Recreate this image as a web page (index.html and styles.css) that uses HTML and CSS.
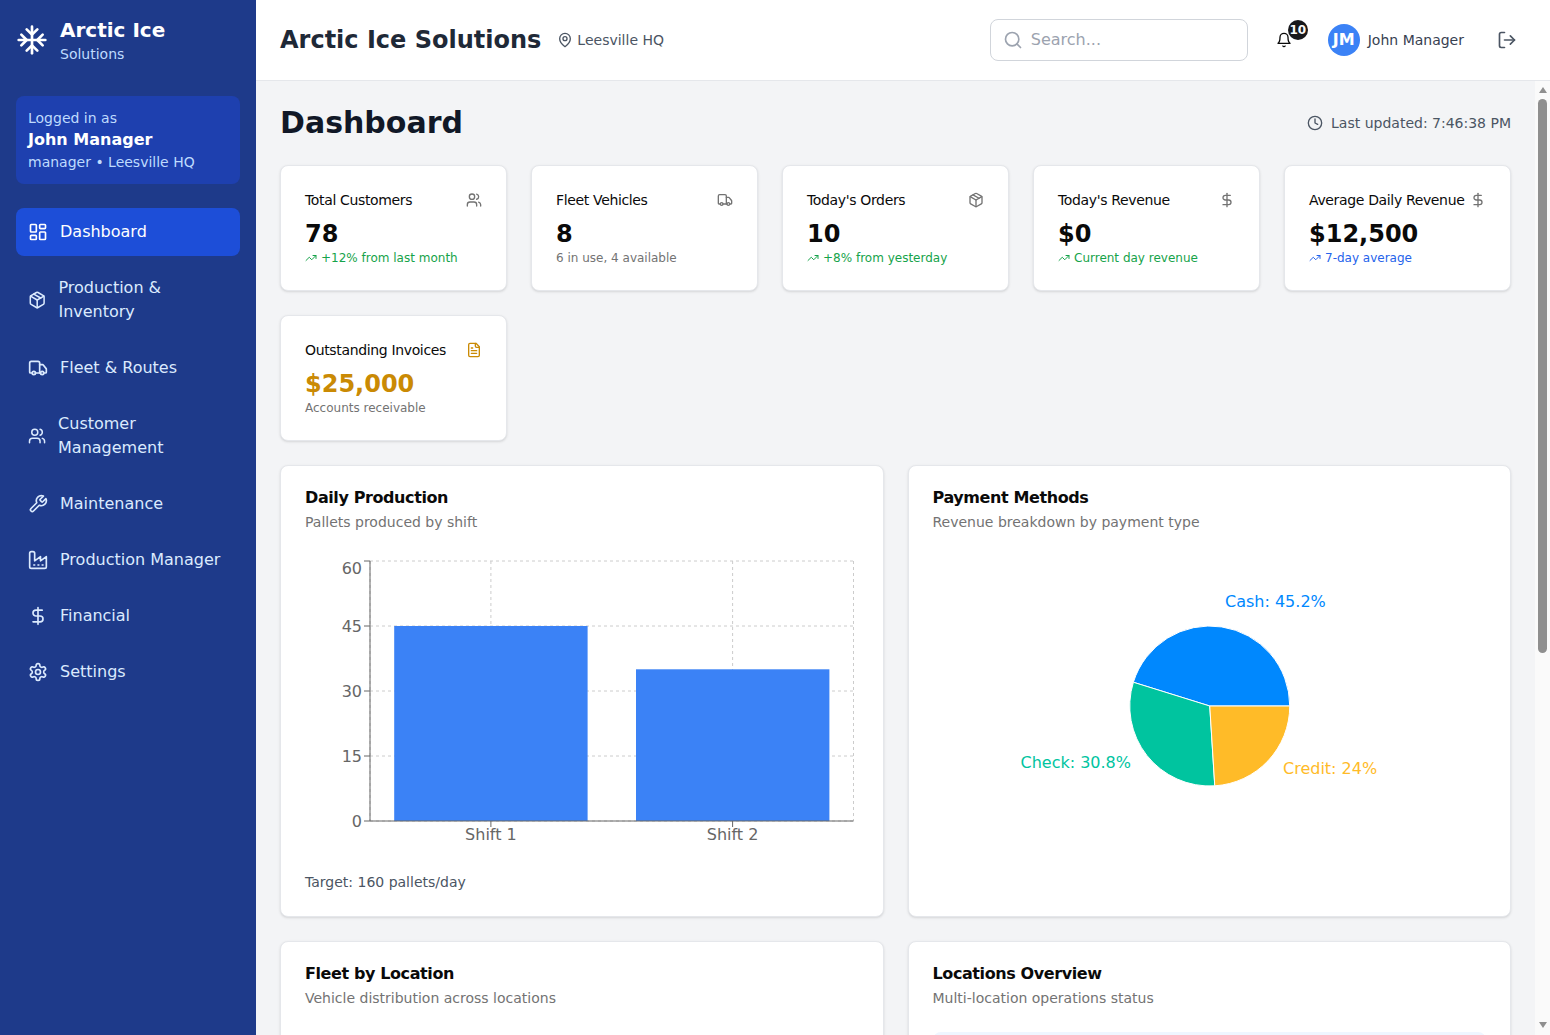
FILE: index.html
```html
<!DOCTYPE html>
<html lang="en">
<head>
    <meta charset="UTF-8">
    <meta name="viewport" content="width=device-width, initial-scale=1.0">
    <title>Arctic Ice Solutions</title>
    <link rel="stylesheet" href="styles.css">
</head>
<body>
    <svg class="sprite" xmlns="http://www.w3.org/2000/svg">
        <symbol id="i-snowflake" viewBox="0 0 24 24"><path d="M2 12h20"/><path d="M12 2v20"/><path d="m20 16-4-4 4-4"/><path d="m4 8 4 4-4 4"/><path d="m16 4-4 4-4-4"/><path d="m8 20 4-4 4 4"/></symbol>
        <symbol id="i-dashboard" viewBox="0 0 24 24"><rect width="7" height="9" x="3" y="3" rx="1"/><rect width="7" height="5" x="14" y="3" rx="1"/><rect width="7" height="9" x="14" y="12" rx="1"/><rect width="7" height="5" x="3" y="16" rx="1"/></symbol>
        <symbol id="i-package" viewBox="0 0 24 24"><path d="M11 21.73a2 2 0 0 0 2 0l7-4A2 2 0 0 0 21 16V8a2 2 0 0 0-1-1.73l-7-4a2 2 0 0 0-2 0l-7 4A2 2 0 0 0 3 8v8a2 2 0 0 0 1 1.73z"/><path d="M12 22V12"/><path d="m3.3 7 8.7 5 8.7-5"/><path d="m7.5 4.27 9 5.15"/></symbol>
        <symbol id="i-truck" viewBox="0 0 24 24"><path d="M14 18V6a2 2 0 0 0-2-2H4a2 2 0 0 0-2 2v11a1 1 0 0 0 1 1h2"/><path d="M15 18H9"/><path d="M19 18h2a1 1 0 0 0 1-1v-3.65a1 1 0 0 0-.22-.624l-3.48-4.35A1 1 0 0 0 17.52 8H14"/><circle cx="17" cy="18" r="2"/><circle cx="7" cy="18" r="2"/></symbol>
        <symbol id="i-users" viewBox="0 0 24 24"><path d="M16 21v-2a4 4 0 0 0-4-4H6a4 4 0 0 0-4 4v2"/><circle cx="9" cy="7" r="4"/><path d="M22 21v-2a4 4 0 0 0-3-3.87"/><path d="M16 3.13a4 4 0 0 1 0 7.75"/></symbol>
        <symbol id="i-wrench" viewBox="0 0 24 24"><path d="M14.7 6.3a1 1 0 0 0 0 1.4l1.6 1.6a1 1 0 0 0 1.4 0l3.77-3.77a6 6 0 0 1-7.94 7.94l-6.91 6.91a2.12 2.12 0 0 1-3-3l6.91-6.91a6 6 0 0 1 7.94-7.94l-3.76 3.76z"/></symbol>
        <symbol id="i-factory" viewBox="0 0 24 24"><path d="M2 20a2 2 0 0 0 2 2h16a2 2 0 0 0 2-2V8l-7 5V8l-7 5V4a2 2 0 0 0-2-2H4a2 2 0 0 0-2 2Z"/><path d="M17 18h1"/><path d="M12 18h1"/><path d="M7 18h1"/></symbol>
        <symbol id="i-dollar" viewBox="0 0 24 24"><path d="M12 2v20"/><path d="M17 5H9.5a3.5 3.5 0 0 0 0 7h5a3.5 3.5 0 0 1 0 7H6"/></symbol>
        <symbol id="i-settings" viewBox="0 0 24 24"><path d="M12.22 2h-.44a2 2 0 0 0-2 2v.18a2 2 0 0 1-1 1.73l-.43.25a2 2 0 0 1-2 0l-.15-.08a2 2 0 0 0-2.73.73l-.22.38a2 2 0 0 0 .73 2.73l.15.1a2 2 0 0 1 1 1.72v.51a2 2 0 0 1-1 1.74l-.15.09a2 2 0 0 0-.73 2.73l.22.38a2 2 0 0 0 2.73.73l.15-.08a2 2 0 0 1 2 0l.43.25a2 2 0 0 1 1 1.73V20a2 2 0 0 0 2 2h.44a2 2 0 0 0 2-2v-.18a2 2 0 0 1 1-1.73l.43-.25a2 2 0 0 1 2 0l.15.08a2 2 0 0 0 2.73-.73l.22-.39a2 2 0 0 0-.73-2.73l-.15-.08a2 2 0 0 1-1-1.74v-.5a2 2 0 0 1 1-1.74l.15-.09a2 2 0 0 0 .73-2.73l-.22-.38a2 2 0 0 0-2.73-.73l-.15.08a2 2 0 0 1-2 0l-.43-.25a2 2 0 0 1-1-1.73V4a2 2 0 0 0-2-2z"/><circle cx="12" cy="12" r="3"/></symbol>
        <symbol id="i-pin" viewBox="0 0 24 24"><path d="M20 10c0 6-8 12-8 12s-8-6-8-12a8 8 0 0 1 16 0Z"/><circle cx="12" cy="10" r="3"/></symbol>
        <symbol id="i-search" viewBox="0 0 24 24"><circle cx="11" cy="11" r="8"/><path d="m21 21-4.3-4.3"/></symbol>
        <symbol id="i-bell" viewBox="0 0 24 24"><path d="M6 8a6 6 0 0 1 12 0c0 7 3 9 3 9H3s3-2 3-9"/><path d="M10.3 21a1.94 1.94 0 0 0 3.4 0"/></symbol>
        <symbol id="i-logout" viewBox="0 0 24 24"><path d="M9 21H5a2 2 0 0 1-2-2V5a2 2 0 0 1 2-2h4"/><polyline points="16 17 21 12 16 7"/><path d="M21 12H9"/></symbol>
        <symbol id="i-clock" viewBox="0 0 24 24"><circle cx="12" cy="12" r="10"/><polyline points="12 6 12 12 16 14"/></symbol>
        <symbol id="i-trend" viewBox="0 0 24 24"><polyline points="22 7 13.5 15.5 8.5 10.5 2 17"/><polyline points="16 7 22 7 22 13"/></symbol>
        <symbol id="i-file" viewBox="0 0 24 24"><path d="M15 2H6a2 2 0 0 0-2 2v16a2 2 0 0 0 2 2h12a2 2 0 0 0 2-2V7Z"/><path d="M14 2v4a2 2 0 0 0 2 2h4"/><path d="M10 9H8"/><path d="M16 13H8"/><path d="M16 17H8"/></symbol>
    </svg>

    <div class="app">
        <aside class="sidebar">
            <div class="brand">
                <svg class="icon icon-32"><use href="#i-snowflake"/></svg>
                <div>
                    <div class="brand-name">Arctic Ice</div>
                    <div class="brand-sub">Solutions</div>
                </div>
            </div>

            <div class="login-box">
                <div class="login-label">Logged in as</div>
                <div class="login-name">John Manager</div>
                <div class="login-label">manager • Leesville HQ</div>
            </div>

            <nav class="nav">
                <a class="nav-item active" href="#"><svg class="icon icon-20"><use href="#i-dashboard"/></svg><span>Dashboard</span></a>
                <a class="nav-item" href="#"><svg class="icon icon-20"><use href="#i-package"/></svg><span>Production &amp; Inventory</span></a>
                <a class="nav-item" href="#"><svg class="icon icon-20"><use href="#i-truck"/></svg><span>Fleet &amp; Routes</span></a>
                <a class="nav-item" href="#"><svg class="icon icon-20"><use href="#i-users"/></svg><span>Customer Management</span></a>
                <a class="nav-item" href="#"><svg class="icon icon-20"><use href="#i-wrench"/></svg><span>Maintenance</span></a>
                <a class="nav-item" href="#"><svg class="icon icon-20"><use href="#i-factory"/></svg><span>Production Manager</span></a>
                <a class="nav-item" href="#"><svg class="icon icon-20"><use href="#i-dollar"/></svg><span>Financial</span></a>
                <a class="nav-item" href="#"><svg class="icon icon-20"><use href="#i-settings"/></svg><span>Settings</span></a>
            </nav>
        </aside>

        <div class="content">
            <header class="topbar">
                <div class="topbar-left">
                    <div class="topbar-title">Arctic Ice Solutions</div>
                    <div class="topbar-location"><svg class="icon icon-16"><use href="#i-pin"/></svg>Leesville HQ</div>
                </div>
                <div class="topbar-right">
                    <div class="search">
                        <svg class="icon icon-20"><use href="#i-search"/></svg>
                        <input class="search-input" type="text" placeholder="Search...">
                    </div>
                    <button class="icon-button bell">
                        <svg class="icon icon-16"><use href="#i-bell"/></svg>
                        <span class="badge">10</span>
                    </button>
                    <div class="user">
                        <div class="avatar">JM</div>
                        <span>John Manager</span>
                    </div>
                    <button class="icon-button logout"><svg class="icon icon-20"><use href="#i-logout"/></svg></button>
                </div>
            </header>

            <div class="body-row">
                <main class="main">
                    <div class="page-head">
                        <h1>Dashboard</h1>
                        <div class="updated"><svg class="icon icon-16"><use href="#i-clock"/></svg>Last updated: 7:46:38 PM</div>
                    </div>

                    <div class="stats">
                        <div class="card stat">
                            <div class="stat-head"><span>Total Customers</span><svg class="icon icon-16"><use href="#i-users"/></svg></div>
                            <div class="stat-value">78</div>
                            <div class="stat-note green"><svg class="icon icon-12"><use href="#i-trend"/></svg>+12% from last month</div>
                        </div>
                        <div class="card stat">
                            <div class="stat-head"><span>Fleet Vehicles</span><svg class="icon icon-16"><use href="#i-truck"/></svg></div>
                            <div class="stat-value">8</div>
                            <div class="stat-note">6 in use, 4 available</div>
                        </div>
                        <div class="card stat">
                            <div class="stat-head"><span>Today's Orders</span><svg class="icon icon-16"><use href="#i-package"/></svg></div>
                            <div class="stat-value">10</div>
                            <div class="stat-note green"><svg class="icon icon-12"><use href="#i-trend"/></svg>+8% from yesterday</div>
                        </div>
                        <div class="card stat">
                            <div class="stat-head"><span>Today's Revenue</span><svg class="icon icon-16"><use href="#i-dollar"/></svg></div>
                            <div class="stat-value">$0</div>
                            <div class="stat-note green"><svg class="icon icon-12"><use href="#i-trend"/></svg>Current day revenue</div>
                        </div>
                        <div class="card stat">
                            <div class="stat-head"><span>Average Daily Revenue</span><svg class="icon icon-16"><use href="#i-dollar"/></svg></div>
                            <div class="stat-value">$12,500</div>
                            <div class="stat-note blue"><svg class="icon icon-12"><use href="#i-trend"/></svg>7-day average</div>
                        </div>
                        <div class="card stat">
                            <div class="stat-head"><span>Outstanding Invoices</span><svg class="icon icon-16 amber"><use href="#i-file"/></svg></div>
                            <div class="stat-value amber">$25,000</div>
                            <div class="stat-note">Accounts receivable</div>
                        </div>
                    </div>

                    <div class="panels">
                        <section class="card panel">
                            <h3>Daily Production</h3>
                            <p class="panel-sub">Pallets produced by shift</p>
                            <svg class="chart" height="300">
                                <g class="grid">
                                    <path d="M65 5H548.5M65 70H548.5M65 135H548.5M65 200H548.5M65 265H548.5"/>
                                    <path d="M65 5V265M185.9 5V265M427.6 5V265M548.5 5V265"/>
                                </g>
                                <rect class="bar" x="89.2" y="70" width="193.4" height="195"/>
                                <rect class="bar" x="331" y="113.3" width="193.4" height="151.7"/>
                                <g class="axis">
                                    <path d="M65 5V265H548.5"/>
                                    <path d="M59 5H65M59 70H65M59 135H65M59 200H65M59 265H65"/>
                                    <path d="M185.9 265V271M427.6 265V271"/>
                                </g>
                                <g class="tick" text-anchor="end">
                                    <text x="57" y="18">60</text>
                                    <text x="57" y="76">45</text>
                                    <text x="57" y="141">30</text>
                                    <text x="57" y="206">15</text>
                                    <text x="57" y="271">0</text>
                                </g>
                                <g class="tick" text-anchor="middle">
                                    <text x="185.9" y="284">Shift 1</text>
                                    <text x="427.6" y="284">Shift 2</text>
                                </g>
                            </svg>
                            <p class="panel-foot">Target: 160 pallets/day</p>
                        </section>

                        <section class="card panel">
                            <h3>Payment Methods</h3>
                            <p class="panel-sub">Revenue breakdown by payment type</p>
                            <svg class="chart" height="300">
                                <g class="slices">
                                    <path fill="#0088fe" d="M276.75 150H356.75A80 80 0 0 0 200.36 126.24Z"/>
                                    <path fill="#00c49f" d="M276.75 150L200.36 126.24A80 80 0 0 0 281.77 229.84Z"/>
                                    <path fill="#ffbb28" d="M276.75 150L281.77 229.84A80 80 0 0 0 356.75 150Z"/>
                                </g>
                                <text class="pie-label" fill="#0088fe" x="292" y="51">Cash: 45.2%</text>
                                <text class="pie-label" fill="#00c49f" x="198" y="212" text-anchor="end">Check: 30.8%</text>
                                <text class="pie-label" fill="#ffbb28" x="350" y="218">Credit: 24%</text>
                            </svg>
                        </section>

                        <section class="card panel">
                            <h3>Fleet by Location</h3>
                            <p class="panel-sub">Vehicle distribution across locations</p>
                        </section>

                        <section class="card panel">
                            <h3>Locations Overview</h3>
                            <p class="panel-sub">Multi-location operations status</p>
                            <div class="location-row"></div>
                        </section>
                    </div>
                </main>

                <div class="scrollbar">
                    <span class="scroll-arrow up"></span>
                    <span class="scroll-thumb"></span>
                    <span class="scroll-arrow down"></span>
                </div>
            </div>
        </div>
    </div>
</body>
</html>
```

FILE: styles.css
```css
* {
    box-sizing: border-box;
}
body {
    margin: 0;
    font-family: "DejaVu Sans", sans-serif;
    font-size: 16px;
    line-height: 24px;
    color: #0a0a0a;
    background-color: #f3f4f6;
}
h1, h3, p {
    margin: 0;
}
.sprite {
    display: none;
}
.icon {
    fill: none;
    stroke: currentColor;
    stroke-width: 2;
    stroke-linecap: round;
    stroke-linejoin: round;
}
.icon-12 { width: 12px; height: 12px; }
.icon-16 { width: 16px; height: 16px; }
.icon-20 { width: 20px; height: 20px; }
.icon-32 { width: 32px; height: 32px; flex-shrink: 0; }

.app {
    display: flex;
    height: 100vh;
    overflow: hidden;
}

/* sidebar */
.sidebar {
    width: 256px;
    flex-shrink: 0;
    padding: 16px;
    background-color: #1e3a8a;
    color: #fff;
}
.brand {
    display: flex;
    align-items: center;
    gap: 12px;
    height: 48px;
    margin-bottom: 32px;
}
.brand-name {
    font-size: 20px;
    line-height: 28px;
    font-weight: 700;
}
.brand-sub {
    font-size: 14px;
    line-height: 20px;
    color: #bfdbfe;
}
.login-box {
    padding: 12px;
    margin-bottom: 24px;
    background-color: #1e40af;
    border-radius: 8px;
}
.login-label {
    font-size: 14px;
    line-height: 20px;
    color: #bfdbfe;
}
.login-name {
    font-weight: 700;
}
.nav {
    display: flex;
    flex-direction: column;
    gap: 8px;
}
.nav-item {
    display: flex;
    align-items: center;
    gap: 12px;
    padding: 12px;
    border-radius: 8px;
    color: #dbeafe;
    text-decoration: none;
}
.nav-item.active {
    background-color: #1d4ed8;
    color: #fff;
}

/* top bar */
.content {
    flex: 1;
    min-width: 0;
    display: flex;
    flex-direction: column;
}
.topbar {
    height: 81px;
    flex-shrink: 0;
    display: flex;
    align-items: center;
    justify-content: space-between;
    padding: 0 24px;
    background-color: #fff;
    border-bottom: 1px solid #e5e7eb;
}
.topbar-left {
    display: flex;
    align-items: center;
    gap: 16px;
}
.topbar-title {
    font-size: 24px;
    line-height: 32px;
    font-weight: 700;
    color: #1f2937;
}
.topbar-location {
    display: flex;
    align-items: center;
    gap: 4px;
    font-size: 14px;
    line-height: 20px;
    color: #4b5563;
}
.topbar-right {
    display: flex;
    align-items: center;
}
.search {
    display: flex;
    align-items: center;
    gap: 8px;
    width: 258px;
    height: 42px;
    padding: 0 12px;
    background-color: #fff;
    border: 1px solid #d1d5db;
    border-radius: 8px;
    color: #9ca3af;
}
.search-input {
    flex: 1;
    min-width: 0;
    padding: 0;
    border: none;
    outline: none;
    font: inherit;
}
.search-input::placeholder {
    color: #9ca3af;
}
.icon-button {
    position: relative;
    display: flex;
    align-items: center;
    justify-content: center;
    width: 36px;
    height: 36px;
    padding: 0;
    border: none;
    background: none;
    font-family: inherit;
    color: #4b5563;
}
.bell {
    margin-left: 18px;
    color: #0a0a0a;
}
.badge {
    position: absolute;
    top: -2px;
    right: -6px;
    width: 20px;
    height: 20px;
    border-radius: 50%;
    background-color: #18181b;
    color: #fafafa;
    font-size: 12px;
    line-height: 20px;
    font-weight: 700;
    text-align: center;
}
.user {
    display: flex;
    align-items: center;
    gap: 8px;
    margin-left: 26px;
    font-size: 14px;
    line-height: 20px;
    color: #374151;
}
.avatar {
    width: 32px;
    height: 32px;
    border-radius: 50%;
    background-color: #3b82f6;
    color: #fff;
    font-size: 16px;
    line-height: 32px;
    font-weight: 700;
    text-align: center;
}
.logout {
    margin-left: 25px;
    margin-right: 1px;
}

/* main area */
.body-row {
    flex: 1;
    min-height: 0;
    display: flex;
}
.main {
    flex: 1;
    min-width: 0;
    overflow: hidden;
    padding: 24px;
}
.scrollbar {
    width: 15px;
    flex-shrink: 0;
    display: flex;
    flex-direction: column;
    align-items: center;
    background-color: #fafafa;
}
.scroll-thumb {
    width: 9px;
    height: 554px;
    margin-top: 6px;
    background-color: #8f8f8f;
    border-radius: 5px;
}
.scroll-arrow {
    width: 0;
    height: 0;
    border-left: 4.5px solid transparent;
    border-right: 4.5px solid transparent;
}
.scroll-arrow.up {
    margin-top: 6px;
    border-bottom: 6px solid #8f8f8f;
}
.scroll-arrow.down {
    margin-top: auto;
    margin-bottom: 7px;
    border-top: 6px solid #8f8f8f;
}
.page-head {
    display: flex;
    align-items: center;
    justify-content: space-between;
    margin-bottom: 24px;
}
.page-head h1 {
    font-size: 30px;
    line-height: 36px;
    font-weight: 700;
    color: #111827;
}
.updated {
    display: flex;
    align-items: center;
    gap: 8px;
    font-size: 14px;
    line-height: 20px;
    color: #4b5563;
}
.card {
    background-color: #fff;
    border: 1px solid #e5e7eb;
    border-radius: 8px;
    box-shadow: 0 1px 3px rgba(0,0,0,0.1), 0 1px 2px -1px rgba(0,0,0,0.1);
}
.stats {
    display: grid;
    grid-template-columns: repeat(5, 1fr);
    gap: 24px;
    margin-bottom: 24px;
}
.stat {
    padding: 24px;
}
.stat-head {
    display: flex;
    align-items: center;
    justify-content: space-between;
    margin-bottom: 8px;
    font-size: 14px;
    line-height: 20px;
    letter-spacing: -0.35px;
}
.stat-head .icon {
    color: #737373;
}
.stat-head .icon.amber {
    color: #ca8a04;
}
.stat-value {
    font-size: 24px;
    line-height: 32px;
    font-weight: 700;
}
.stat-value.amber {
    color: #ca8a04;
}
.stat-note {
    display: flex;
    align-items: center;
    gap: 4px;
    font-size: 12px;
    line-height: 16px;
    color: #737373;
}
.stat-note.green {
    color: #16a34a;
}
.stat-note.blue {
    color: #2563eb;
}
.panels {
    display: grid;
    grid-template-columns: repeat(2, 1fr);
    gap: 24px;
}
.panel {
    padding: 24px;
}
.panel h3 {
    font-size: 16px;
    line-height: 16px;
    font-weight: 700;
    letter-spacing: -0.4px;
}
.panel-sub {
    margin-top: 6px;
    margin-bottom: 24px;
    font-size: 14px;
    line-height: 20px;
    color: #737373;
}
.panel-foot {
    margin-top: 16px;
    font-size: 14px;
    line-height: 20px;
    color: #4b5563;
}
.chart {
    display: block;
    width: 100%;
}
.grid path {
    fill: none;
    stroke: #ccc;
    stroke-dasharray: 3 3;
}
.bar {
    fill: #3b82f6;
}
.axis path {
    fill: none;
    stroke: #666;
}
.tick text {
    fill: #666;
    font-size: 16px;
}
.slices path {
    stroke: #fff;
}
.pie-label {
    font-size: 16px;
}
.location-row {
    height: 120px;
    background-color: #eff6ff;
    border-radius: 8px;
}
```
